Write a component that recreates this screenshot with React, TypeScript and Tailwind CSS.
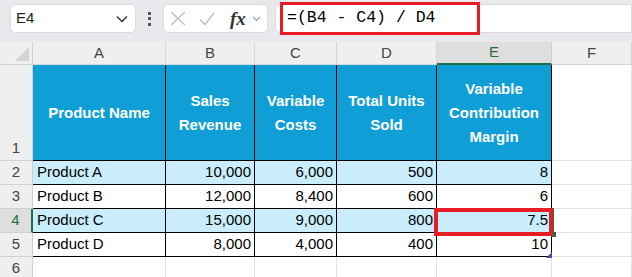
const cols = ["A", "B", "C", "D", "E", "F"]

const headers = [
  ["Product Name"],
  ["Sales", "Revenue"],
  ["Variable", "Costs"],
  ["Total Units", "Sold"],
  ["Variable", "Contribution", "Margin"],
]

const rows = [
  ["Product A", "10,000", "6,000", "500", "8"],
  ["Product B", "12,000", "8,400", "600", "6"],
  ["Product C", "15,000", "9,000", "800", "7.5"],
  ["Product D", "8,000", "4,000", "400", "10"],
]

function NameBox() {
  return (
    <div className="ml-[10px] w-[126px] h-[29px] rounded-[5px] bg-white border border-[#dcdcdc] flex items-center justify-between pl-[5px] pr-[7px]">
      <span className="text-[15px] text-[#222]">E4</span>
      <svg width="12" height="8" viewBox="0 0 12 8">
        <path d="M1 1.5 L6 6.5 L11 1.5" fill="none" stroke="#333" strokeWidth="1.4" />
      </svg>
    </div>
  )
}

function FxBox() {
  return (
    <div className="w-[105px] h-[29px] rounded-[5px] bg-white border border-[#dcdcdc] flex items-center pl-[6px]">
      <svg width="16" height="15" viewBox="0 0 16 15">
        <path d="M1 1 L15 14 M15 1 L1 14" stroke="#bdbdbd" strokeWidth="1.3" fill="none" />
      </svg>
      <svg width="16" height="14" viewBox="0 0 16 14" className="ml-[13px]">
        <path d="M1 7.5 L6 12.5 L15 1" stroke="#bdbdbd" strokeWidth="1.3" fill="none" />
      </svg>
      <span className="ml-[15px] text-[19px] italic font-bold text-[#333] leading-none" style={{ fontFamily: '"Liberation Serif", serif' }}>
        fx
      </span>
      <svg width="9" height="6" viewBox="0 0 9 6" className="ml-[6px]">
        <path d="M1 1 L4.5 4.5 L8 1" stroke="#9a9a9a" strokeWidth="1.1" fill="none" />
      </svg>
    </div>
  )
}

export default function App() {
  return (
    <div className="w-[632px] h-[277px] overflow-hidden bg-white" style={{ fontFamily: '"Liberation Sans", Arial, sans-serif' }}>
      <div className="relative h-[42px] bg-[#e9e9ed] flex items-start pt-[4px]">
        <NameBox />
        <div className="w-[27px] h-[29px] flex flex-col items-center justify-center gap-[2.5px]">
          <div className="w-[3px] h-[3px] bg-[#555]" />
          <div className="w-[3px] h-[3px] bg-[#555]" />
          <div className="w-[3px] h-[3px] bg-[#555]" />
        </div>
        <FxBox />
        <div className="ml-[7px] flex-1 h-[29px] rounded-l-[5px] bg-white border border-[#dcdcdc] flex items-center pl-[11px]">
          <span className="text-[16.5px] text-black whitespace-pre" style={{ fontFamily: '"Liberation Mono", monospace' }}>
            =(B4 - C4) / D4
          </span>
        </div>
        <div className="absolute left-[280px] top-[2px] w-[200px] h-[33px] border-[3px] border-[#e81c24]" />
      </div>

      <div className="relative grid grid-cols-[33px_133px_89px_82px_100px_115px_80px] grid-rows-[23px_96px_24px_24px_24px_24px_24px]">
        <div className="relative bg-[#efefef] border-r border-b border-[#d0d0d0]">
          <div className="absolute right-[3px] bottom-[3px] w-0 h-0 border-l-[14px] border-l-transparent border-b-[14px] border-b-[#d4d4d4]" />
        </div>
        {cols.map((c) =>
          c === "E" ? (
            <div key={c} className="bg-[#dedede] border-r border-[#cfcfcf] border-b-2 border-b-[#1e7145] flex items-center justify-center text-[15px] text-[#1e6e42]">
              {c}
            </div>
          ) : (
            <div key={c} className="bg-[#efefef] border-r border-b border-[#d6d6d6] flex items-center justify-center text-[15px] text-[#444]">
              {c}
            </div>
          )
        )}

        <div className="bg-[#efefef] border-r border-b border-[#d0d0d0] flex items-end justify-center pb-[1px] text-[15px] text-[#444] leading-[22px]">
          1
        </div>
        {headers.map((h, i) => (
          <div key={i} className="bg-[#0f9ed5] border-r border-b border-black flex flex-col items-center justify-center text-white font-bold text-[15px] leading-[24px]">
            {h.map((l) => (
              <span key={l}>{l}</span>
            ))}
          </div>
        ))}
        <div className="border-r border-b border-[#e1e1e1]" />

        {rows.map((r, ri) => {
          const n = ri + 2
          const sel = n === 4
          const fill = n % 2 === 0 ? "bg-[#caedfb]" : "bg-white"
          return [
            <div
              key={"h" + n}
              className={
                sel
                  ? "bg-[#dedede] border-r-2 border-r-[#1e7145] border-b border-b-[#d0d0d0] flex items-center justify-center text-[15px] text-[#1e6e42]"
                  : "bg-[#efefef] border-r border-b border-[#d0d0d0] flex items-center justify-center text-[15px] text-[#444]"
              }
            >
              {n}
            </div>,
            ...r.map((v, ci) => (
              <div
                key={n + "-" + ci}
                className={`${fill} border-r border-b border-black flex items-center text-[15px] text-black ${ci === 0 ? "pl-[4px]" : "justify-end pr-[3px]"}`}
              >
                {v}
              </div>
            )),
            <div key={"f" + n} className="border-r border-b border-[#e1e1e1]" />,
          ]
        })}

        <div className="bg-[#efefef] border-r border-b border-[#d0d0d0] flex items-center justify-center text-[15px] text-[#444]">
          6
        </div>
        {cols.map((c) => (
          <div key={"r6" + c} className="border-r border-b border-[#e1e1e1]" />
        ))}

        <div className="absolute left-[436px] top-[166px] w-[118px] h-[28px] border-2 border-[#1e7145]" />
        <div className="absolute left-[551px] top-[190px] w-[5px] h-[5px] bg-[#1e7145]" />
        <div className="absolute left-[434px] top-[166px] w-[119px] h-[28px] border-4 border-[#e81c24]" />
        <div className="absolute left-[546px] top-[210px] w-0 h-0 border-l-[6px] border-l-transparent border-b-[6px] border-b-[#4a4ea6]" />
      </div>
    </div>
  )
}
